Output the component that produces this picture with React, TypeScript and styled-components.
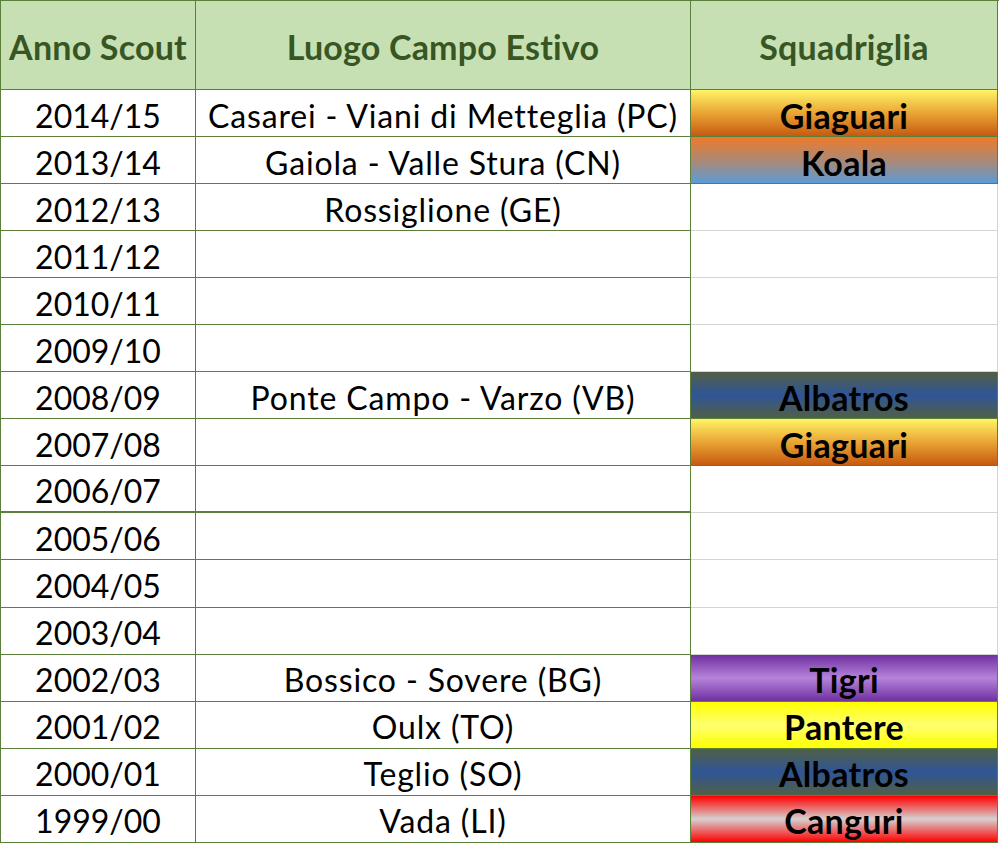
import React from "react";
import styled, { createGlobalStyle, css } from "styled-components";

const GlobalStyle = createGlobalStyle`
  html, body { margin: 0; padding: 0; background: #ffffff; }
  body { font-family: "Lato", "Open Sans", sans-serif; }
`;

const GREEN = "#5a803c";
const GRID = "#d4d4d4";

type Team = "giaguari" | "koala" | "albatros" | "tigri" | "pantere" | "canguri";

const fills: Record<Team, string> = {
  giaguari: "linear-gradient(to bottom, #fff466 0%, #e9a535 50%, #c65a10 100%)",
  koala: "linear-gradient(to bottom, #ee7a2a 0%, #a68a7c 55%, #5b9bd5 100%)",
  albatros: "linear-gradient(to bottom, #515f45 0%, #2f5597 50%, #515f45 100%)",
  tigri: "linear-gradient(to bottom, #7030a0 0%, #b683da 50%, #7030a0 100%)",
  pantere: "linear-gradient(to bottom, #ffff00 0%, #ffff70 50%, #ffff00 100%)",
  canguri: "linear-gradient(to bottom, #ff0000 0%, #d6d0d0 50%, #ff0000 100%)",
};

const labels: Record<Team, string> = {
  giaguari: "Giaguari",
  koala: "Koala",
  albatros: "Albatros",
  tigri: "Tigri",
  pantere: "Pantere",
  canguri: "Canguri",
};

const Sheet = styled.div`
  display: grid;
  grid-template-columns: 195px 495px 307px;
  grid-template-rows: 89px repeat(16, 47.06px);
  width: 998px;
  border-top: 1px solid ${GREEN};
  border-left: 1px solid ${GREEN};
`;

const HeaderCell = styled.div`
  box-sizing: border-box;
  display: flex;
  align-items: center;
  justify-content: center;
  background: #c6e0b4;
  color: #375623;
  font-weight: 700;
  font-size: 34px;
  letter-spacing: 0.2px;
  white-space: nowrap;
  border-right: 1px solid ${GREEN};
  border-bottom: 1px solid ${GREEN};
  padding-top: 2px;
`;

const Cell = styled.div<{ $thick?: boolean; $spaced?: boolean }>`
  box-sizing: border-box;
  display: flex;
  align-items: center;
  justify-content: center;
  color: #000000;
  font-size: 32px;
  letter-spacing: ${(p) => (p.$spaced ? "0.85px" : "0")};
  white-space: nowrap;
  padding-top: 4px;
  border-right: 1px solid ${GREEN};
  border-bottom: ${(p) => (p.$thick ? "2px" : "1px")} solid ${GREEN};
`;

const TeamCell = styled.div<{ $team?: Team }>`
  box-sizing: border-box;
  display: flex;
  align-items: center;
  justify-content: center;
  color: #000000;
  font-weight: 700;
  font-size: 34px;
  letter-spacing: 0.3px;
  padding-top: 4px;
  ${(p) =>
    p.$team
      ? css`
          background: ${fills[p.$team]};
          border-right: 1px solid ${GREEN};
          border-bottom: 1px solid ${GREEN};
        `
      : css`
          background: #ffffff;
          border-right: 1px solid ${GRID};
          border-bottom: 1px solid ${GRID};
        `}
`;

type Row = { year: string; place?: string; team?: Team };

const rows: Row[] = [
  { year: "2014/15", place: "Casarei - Viani di Metteglia (PC)", team: "giaguari" },
  { year: "2013/14", place: "Gaiola - Valle Stura (CN)", team: "koala" },
  { year: "2012/13", place: "Rossiglione (GE)" },
  { year: "2011/12" },
  { year: "2010/11" },
  { year: "2009/10" },
  { year: "2008/09", place: "Ponte Campo - Varzo (VB)", team: "albatros" },
  { year: "2007/08", team: "giaguari" },
  { year: "2006/07" },
  { year: "2005/06" },
  { year: "2004/05" },
  { year: "2003/04" },
  { year: "2002/03", place: "Bossico - Sovere (BG)", team: "tigri" },
  { year: "2001/02", place: "Oulx (TO)", team: "pantere" },
  { year: "2000/01", place: "Teglio (SO)", team: "albatros" },
  { year: "1999/00", place: "Vada (LI)", team: "canguri" },
];

export default function App() {
  return (
    <>
      <GlobalStyle />
      <Sheet>
        <HeaderCell>Anno Scout</HeaderCell>
        <HeaderCell>Luogo Campo Estivo</HeaderCell>
        <HeaderCell>Squadriglia</HeaderCell>
        {rows.map((r, i) => (
          <React.Fragment key={r.year}>
            <Cell $thick={i === 8}>{r.year}</Cell>
            <Cell $thick={i === 8} $spaced>
              {r.place ?? ""}
            </Cell>
            <TeamCell $team={r.team}>{r.team ? labels[r.team] : ""}</TeamCell>
          </React.Fragment>
        ))}
      </Sheet>
    </>
  );
}
